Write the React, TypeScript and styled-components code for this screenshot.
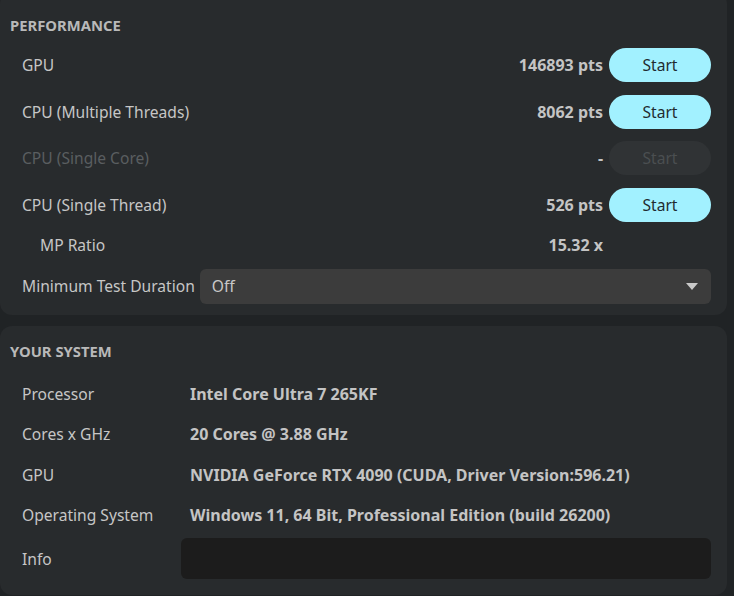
import React from "react";
import styled, { createGlobalStyle } from "styled-components";

const Global = createGlobalStyle`
  html, body {
    margin: 0;
    padding: 0;
    background: #202325;
    overflow: hidden;
  }
  body {
    font-family: "Noto Sans", "Open Sans", sans-serif;
    color: #c4c4c4;
  }
`;

const Page = styled.div`
  display: flex;
  flex-direction: column;
  gap: 11px;
  width: 727px;
  margin-top: -8px;
`;

const Panel = styled.section<{ $padTop: number; $padBottom: number }>`
  background: #282b2d;
  border-radius: 12px;
  padding: ${(p) => p.$padTop}px 16px ${(p) => p.$padBottom}px 10px;
  display: flex;
  flex-direction: column;
`;

const Heading = styled.h2<{ $height: number }>`
  margin: 0;
  height: ${(p) => p.$height}px;
  display: flex;
  align-items: center;
  font-size: 14.8px;
  font-weight: 700;
  color: #b9b9b9;
`;

const Spacer = styled.div<{ $size: number }>`
  height: ${(p) => p.$size}px;
  flex: none;
`;

const BenchRow = styled.div<{ $height: number; $gap?: number }>`
  height: ${(p) => p.$height}px;
  display: flex;
  align-items: center;
  gap: ${(p) => p.$gap ?? 6}px;
  padding-left: 12px;
`;

const Label = styled.span<{ $dim?: boolean; $indent?: number }>`
  font-size: 15.6px;
  color: ${(p) => (p.$dim ? "#5a5e60" : "#c6c6c6")};
  padding-left: ${(p) => p.$indent ?? 0}px;
  white-space: nowrap;
`;

const Score = styled.span`
  flex: 1;
  text-align: right;
  font-size: 16px;
  font-weight: 700;
  color: #c4c4c4;
  white-space: nowrap;
`;

const RatioValue = styled(Score)`
  padding-right: 108px;
`;

const StartButton = styled.button`
  width: 102px;
  height: 34px;
  border: none;
  border-radius: 17px;
  background: #a2f1ff;
  color: #1f2b30;
  font-family: inherit;
  font-size: 15.6px;
  padding: 0;
  cursor: pointer;
  &:disabled {
    background: #303335;
    color: #4b4f51;
    cursor: default;
  }
`;

const Select = styled.div`
  flex: 1;
  height: 35px;
  background: #3c3c3c;
  border-radius: 6px;
  display: flex;
  align-items: center;
  justify-content: space-between;
  padding: 0 13px 0 12px;
  font-size: 15.6px;
  color: #c8c8c8;
`;

const InfoRow = styled.div<{ $height: number }>`
  height: ${(p) => p.$height}px;
  display: grid;
  grid-template-columns: 159px 1fr;
  align-items: center;
  padding-left: 12px;
`;

const InfoValue = styled.span`
  padding-left: 9px;
  font-size: 16px;
  font-weight: 700;
  color: #c4c4c4;
  white-space: nowrap;
`;

const InfoBox = styled.div`
  height: 41px;
  background: #1c1c1c;
  border-radius: 6px;
`;

const Caret = () => (
  <svg width="12" height="7" viewBox="0 0 12 7">
    <path d="M0 0 L12 0 L6 7 Z" fill="#c9c9c9" />
  </svg>
);

const benches = [
  { name: "GPU", score: "146893 pts", enabled: true },
  { name: "CPU (Multiple Threads)", score: "8062 pts", enabled: true },
  { name: "CPU (Single Core)", score: "-", enabled: false },
  { name: "CPU (Single Thread)", score: "526 pts", enabled: true },
];

const system = [
  { name: "Processor", value: "Intel Core Ultra 7 265KF", h: 40 },
  { name: "Cores x GHz", value: "20 Cores @ 3.88 GHz", h: 40.5 },
  { name: "GPU", value: "NVIDIA GeForce RTX 4090 (CUDA, Driver Version:596.21)", h: 40.5 },
  { name: "Operating System", value: "Windows 11, 64 Bit, Professional Edition (build 26200)", h: 40.5 },
];

export default function App() {
  return (
    <>
      <Global />
      <Page>
        <Panel $padTop={16} $padBottom={5}>
          <Heading $height={33.5}>PERFORMANCE</Heading>
          {benches.map((b) => (
            <BenchRow key={b.name} $height={46.7}>
              <Label $dim={!b.enabled}>{b.name}</Label>
              <Score>{b.score}</Score>
              <StartButton disabled={!b.enabled}>Start</StartButton>
            </BenchRow>
          ))}
          <BenchRow $height={34}>
            <Label $indent={18}>MP Ratio</Label>
            <RatioValue>15.32 x</RatioValue>
          </BenchRow>
          <BenchRow $height={48} $gap={5}>
            <Label>Minimum Test Duration</Label>
            <Select>
              <span>Off</span>
              <Caret />
            </Select>
          </BenchRow>
        </Panel>
        <Panel $padTop={11.5} $padBottom={13}>
          <Heading $height={26}>YOUR SYSTEM</Heading>
          <Spacer $size={10} />
          {system.map((s) => (
            <InfoRow key={s.name} $height={s.h}>
              <Label>{s.name}</Label>
              <InfoValue>{s.value}</InfoValue>
            </InfoRow>
          ))}
          <InfoRow $height={47}>
            <Label>Info</Label>
            <InfoBox />
          </InfoRow>
        </Panel>
      </Page>
    </>
  );
}
